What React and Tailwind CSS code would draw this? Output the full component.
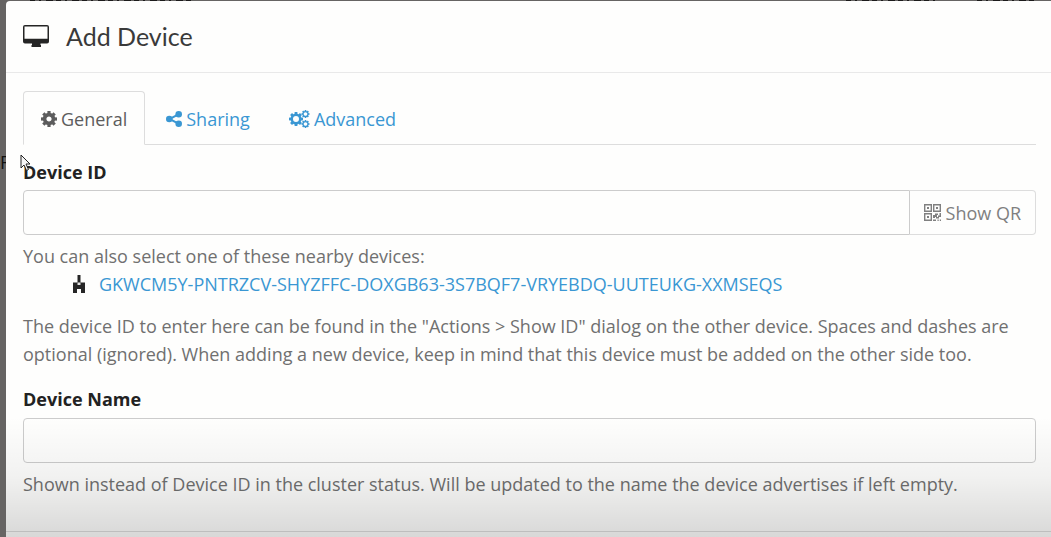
function DesktopIcon() {
  return (
    <svg viewBox="0 0 26 22" className="h-[22px] w-[26px] shrink-0" aria-hidden="true">
      <path fill="#252525" fillRule="evenodd" d="M2 0h22a2 2 0 0 1 2 2v14.500a2 2 0 0 1-2 2h-6.500v1.500h.5V22H8.500v-2H9v-1.500H2a2 2 0 0 1-2-2V2a2 2 0 0 1 2-2zM1.500 1.500v12.300h23V1.500z" />
    </svg>
  );
}

function Gear({ cx, cy, r, ring, tooth }) {
  const angles = [0, 45, 90, 135];
  return (
    <g transform={`translate(${cx} ${cy})`}>
      <circle r={r - tooth - ring / 2} fill="none" stroke="currentColor" strokeWidth={ring} />
      {angles.map((angle) => (
        <g key={angle} transform={`rotate(${angle})`} fill="currentColor">
          <rect x={-r * 0.2} y={-r} width={r * 0.4} height={tooth + 0.6} />
          <rect x={-r * 0.2} y={r - tooth - 0.6} width={r * 0.4} height={tooth + 0.6} />
        </g>
      ))}
    </g>
  );
}

function CogIcon() {
  return (
    <svg viewBox="0 0 16 16" className="size-4 shrink-0" aria-hidden="true">
      <Gear cx={8} cy={8} r={8} ring={3.6} tooth={1.8} />
    </svg>
  );
}

function CogsIcon() {
  return (
    <svg viewBox="0 0 21 18" className="h-[18px] w-[21px] shrink-0" aria-hidden="true">
      <Gear cx={7} cy={9} r={7} ring={2.5} tooth={1.5} />
      <Gear cx={16.500} cy={4} r={4} ring={1.3} tooth={0.9} />
      <Gear cx={16.500} cy={14} r={4} ring={1.3} tooth={0.9} />
    </svg>
  );
}

function ShareIcon() {
  return (
    <svg viewBox="0 0 16 16" className="size-4 shrink-0" fill="currentColor" aria-hidden="true">
      <path d="M12.500 3.300 3.500 8l9 4.700" fill="none" stroke="currentColor" strokeWidth="2" />
      <circle cx="3.300" cy="8" r="3.300" />
      <circle cx="12.700" cy="3.300" r="3.300" />
      <circle cx="12.700" cy="12.700" r="3.300" />
    </svg>
  );
}

function QrIcon() {
  return (
    <svg viewBox="0 0 17 17" className="size-[17px] shrink-0" fill="currentColor" aria-hidden="true">
      <path fillRule="evenodd" d="M0 0h8v8H0zM1.400 1.400v5.200h5.200V1.400zM9 0h8v8H9zM10.400 1.400v5.200h5.200V1.400zM0 9h8v8H0zM1.400 10.400v5.200h5.200v-5.200z" />
      <path d="M3 3h2v2H3zM12 3h2v2h-2zM3 12h2v2H3zM9 11h2V9.500h3V11h-1v2h-2v1H9zM15.500 9H17v4h-2v1.500h-3V13h2v-1.500h1.500zM9 15.500h3V17H9zM13.500 15.500h1.200V17h-1.200zM15.800 15.500H17V17h-1.200z" />
    </svg>
  );
}

function Identicon() {
  return (
    <svg viewBox="0 0 12 18" className="h-[18px] w-3 shrink-0" fill="#262626" aria-hidden="true">
      <path d="M4.500 0h3v7.500H12V18H8v-4H4v4H0V7.500h4.500z" />
      <path d="M4.500 7.500h3v2.500h-3z" fill="#e4e4e4" />
    </svg>
  );
}

function Tab({ icon, children, active }) {
  return (
    <a
      href="#"
      role="tab"
      aria-selected={!!active}
      className={
        "flex h-[54px] items-center gap-1 rounded-t border px-[17px] pt-0.5 " +
        (active ? "-mb-px border-[#dddddd] border-b-transparent bg-[#fefefd] text-[#5c5c5c]" : "border-transparent text-[#3a97d3]")
      }
    >
      {icon}
      {children}
    </a>
  );
}

export default function App() {
  return (
    <div className="relative min-h-screen bg-[#666463] pt-px pl-[6px] font-['Open_Sans','Noto_Sans',sans-serif] text-[18px] leading-7 text-[#707070]">
      <svg className="absolute inset-x-0 top-0 h-px w-full" stroke="#1c1b1b" aria-hidden="true">
        <path d="M30 .5h165M846 .5h90M977 .5h60" strokeDasharray="5 4 2 5 7 3" />
      </svg>
      <span className="absolute top-[148px] left-0 text-[#111]">F</span>
      <div role="dialog" aria-labelledby="title" className="relative min-h-[536px] rounded-tl bg-[#fefefd]">
        <header className="flex h-[72px] items-center gap-[17px] border-b border-[#e9e9e9] px-[17px] pb-0.5">
          <DesktopIcon />
          <h1 id="title" className="font-['Lato','Noto_Sans',sans-serif] text-[25px] text-[#3a3a3a]">Add Device</h1>
        </header>
        <main className="pt-[18px] pr-[15px] pl-[17px]">
          <nav role="tablist" className="flex h-[54px] gap-[3px] border-b border-[#dddddd]">
            <Tab active icon={<CogIcon />}>General</Tab>
            <Tab icon={<ShareIcon />}>Sharing</Tab>
            <Tab icon={<CogsIcon />}>Advanced</Tab>
          </nav>
          <label htmlFor="device-id" className="mt-[13px] mb-1 block font-bold text-[#222]">Device ID</label>
          <div className="flex h-[45px]">
            <input id="device-id" className="min-w-0 flex-1 rounded-l-sm border border-[#cccccc] bg-transparent px-3" />
            <button className="flex items-center gap-[5px] rounded-r-sm border border-l-0 border-[#dddddd] px-[14px] text-[#808080]">
              <QrIcon />
              Show QR
            </button>
          </div>
          <p className="mt-[7px]">You can also select one of these nearby devices:</p>
          <ul className="pl-[50px]">
            <li className="flex items-center gap-[14px]">
              <Identicon />
              <a href="#" className="text-[#3a97d3]">GKWCM5Y-PNTRZCV-SHYZFFC-DOXGB63-3S7BQF7-VRYEBDQ-UUTEUKG-XXMSEQS</a>
            </li>
          </ul>
          <p className="mt-[14px]">
            The device ID to enter here can be found in the "Actions &gt; Show ID" dialog on the other device. Spaces and dashes are optional (ignored). When adding a new device, keep in mind that this device must be added on the other side too.
          </p>
          <label htmlFor="device-name" className="mt-[17px] mb-[5px] block font-bold text-[#222]">Device Name</label>
          <input id="device-name" className="block h-[45px] w-full rounded-sm border border-[#cccccc] bg-transparent px-3" />
          <p className="mt-[7px]">Shown instead of Device ID in the cluster status. Will be updated to the name the device advertises if left empty.</p>
        </main>
        <footer className="mt-[33px] border-t border-[#dddddd]" />
        <div className="pointer-events-none absolute inset-x-0 bottom-0 h-[120px] bg-linear-to-b from-transparent via-black/5 to-black/15" />
      </div>
      <svg viewBox="0 0 12 18" className="absolute top-[154px] left-[20px] h-[18px] w-3" aria-hidden="true">
        <path d="M1 1v13l3-3 2.500 5.500 2-1L6 10h4z" fill="#f5f5f5" stroke="#222" strokeWidth="1" />
      </svg>
    </div>
  );
}
